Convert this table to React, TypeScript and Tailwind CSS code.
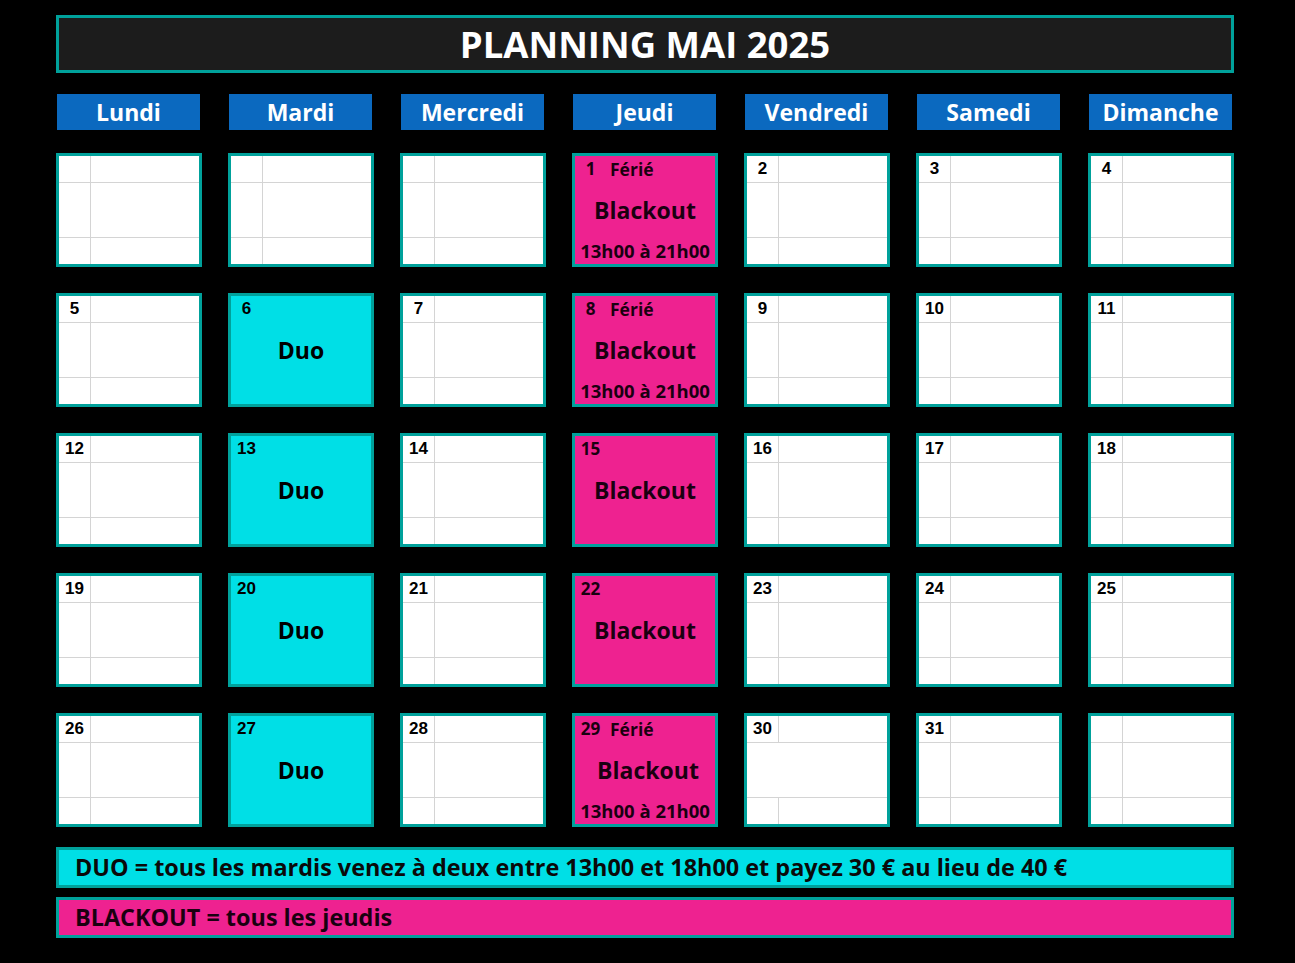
import React from "react";

type Cell = { day: number | null };

const TEAL = "border-[#00a19b]";

function WhiteCell({ day, mergedMiddle }: { day: number | null; mergedMiddle?: boolean }) {
  return (
    <div className={`h-[114px] border-[3px] ${TEAL} bg-[#d4d4d4]`}>
      <div className="grid h-full grid-cols-[31px_1fr] grid-rows-[26px_1fr_26px] gap-px">
        <div className="flex items-center justify-center bg-white text-[17px] font-bold text-black" style={{ fontFamily: '"Liberation Sans", Arial, sans-serif' }}>
          {day ?? ""}
        </div>
        <div className="bg-white" />
        {mergedMiddle ? (
          <div className="col-span-2 bg-white" />
        ) : (
          <>
            <div className="bg-white" />
            <div className="bg-white" />
          </>
        )}
        <div className="bg-white" />
        <div className="bg-white" />
      </div>
    </div>
  );
}

function DuoCell({ day }: { day: number }) {
  return (
    <div className={`h-[114px] border-[3px] ${TEAL} bg-[#00dfe6]`}>
      <div className="grid h-full grid-cols-[31px_1fr] grid-rows-[26px_1fr_26px] gap-px">
        <div className="flex items-center justify-center text-[17px] font-bold text-black" style={{ fontFamily: '"Liberation Sans", Arial, sans-serif' }}>
          {day}
        </div>
        <div />
        <div className="col-span-2 flex items-center justify-center text-[23px] font-bold text-black">Duo</div>
        <div className="col-span-2" />
      </div>
    </div>
  );
}

function BlackoutCell({ day, ferie, shift }: { day: number; ferie?: boolean; shift?: boolean }) {
  return (
    <div className={`h-[114px] border-[3px] ${TEAL} bg-[#ee2290]`}>
      <div className="grid h-full grid-cols-[31px_1fr] grid-rows-[26px_1fr_26px] gap-px">
        <div className="flex items-center justify-center text-[17px] font-bold text-[#1a0010]">{day}</div>
        <div className="flex items-center pl-[3px] text-[17.5px] font-bold text-[#1a0010]">{ferie ? "Férié" : ""}</div>
        <div className={`col-span-2 flex items-center justify-center text-[23px] font-bold text-[#1a0010] ${shift ? "pl-[6px]" : ""}`}>
          Blackout
        </div>
        <div className="col-span-2 flex items-center justify-center text-[18.5px] font-bold text-[#1a0010]">
          {ferie ? "13h00 à 21h00" : ""}
        </div>
      </div>
    </div>
  );
}

export default function App() {
  const days = ["Lundi", "Mardi", "Mercredi", "Jeudi", "Vendredi", "Samedi", "Dimanche"];
  const cells: Cell[] = [];
  for (let i = 0; i < 3; i++) cells.push({ day: null });
  for (let d = 1; d <= 31; d++) cells.push({ day: d });
  cells.push({ day: null });

  return (
    <div className="min-h-screen w-full bg-black pb-[25px]" style={{ fontFamily: '"Open Sans", "Noto Sans", sans-serif' }}>
      <div className="ml-[56px] w-[1178px] pt-[15px]">
        <div className={`flex h-[58px] items-center justify-center border-[3px] ${TEAL} bg-[#1c1c1c] text-[36.5px] font-bold text-white`}>
          PLANNING MAI 2025
        </div>

        <div className="mt-[21px] grid grid-cols-7 gap-[26px]">
          {days.map((d) => (
            <div key={d} className="ml-px flex h-[36px] w-[143px] items-center justify-center bg-[#0b69bf] text-[23px] font-bold text-white">
              {d}
            </div>
          ))}
        </div>

        <div className="mt-[23px] grid grid-cols-7 gap-[26px]">
          {cells.map((c, i) => {
            const col = i % 7;
            if (c.day !== null && col === 1) return <DuoCell key={i} day={c.day} />;
            if (c.day !== null && col === 3) {
              const ferie = c.day === 1 || c.day === 8 || c.day === 29;
              return <BlackoutCell key={i} day={c.day} ferie={ferie} shift={c.day === 29} />;
            }
            return <WhiteCell key={i} day={c.day} mergedMiddle={c.day === 30} />;
          })}
        </div>

        <div className={`mt-[20px] flex h-[41px] items-center border-[3px] ${TEAL} bg-[#00dfe6] pl-[16px] text-[23.4px] font-bold text-[#0a0a0a]`}>
          DUO = tous les mardis venez à deux entre 13h00 et 18h00 et payez 30 € au lieu de 40 €
        </div>
        <div className={`mt-[9px] flex h-[41px] items-center border-[3px] ${TEAL} bg-[#ee2290] pl-[16px] text-[23.4px] font-bold text-[#1a0010]`}>
          BLACKOUT = tous les jeudis
        </div>
      </div>
    </div>
  );
}
